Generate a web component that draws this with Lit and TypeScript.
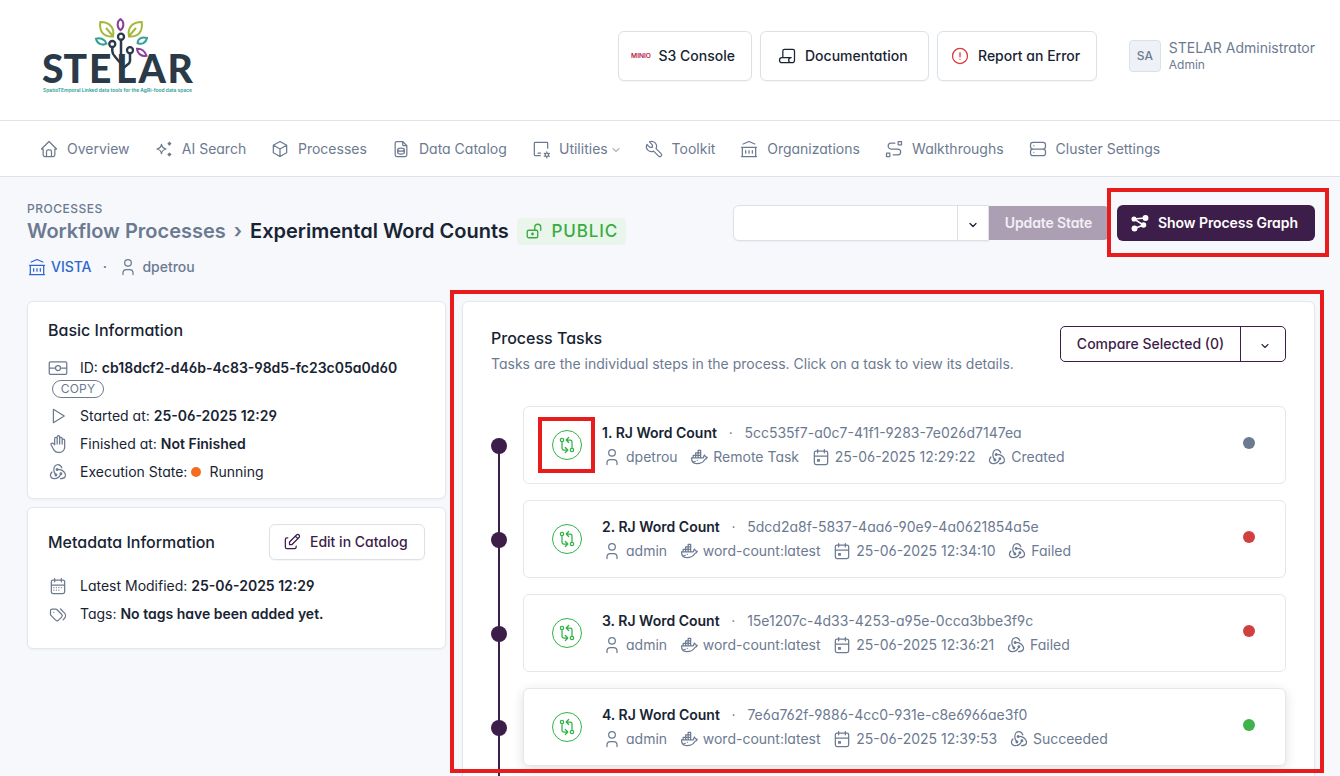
import { LitElement, html, svg, css } from "lit";
import { customElement, property } from "lit/decorators.js";
import { classMap } from "lit/directives/class-map.js";

const BANK = "M3 21l18 0M3 10l18 0M5 6l7 -3l7 3M4 10l0 11M20 10l0 11M8 14l0 3M12 14l0 3M16 14l0 3";
const CAL = "M4 7a2 2 0 0 1 2 -2h12a2 2 0 0 1 2 2v12a2 2 0 0 1 -2 2h-12a2 2 0 0 1 -2 -2v-12zM16 3v4M8 3v4M4 11h16";

const ICONS: Record<string, string> = {
  home: "M5 12l-2 0l9 -9l9 9l-2 0M5 12v7a2 2 0 0 0 2 2h10a2 2 0 0 0 2 -2v-7M9 21v-6a2 2 0 0 1 2 -2h2a2 2 0 0 1 2 2v6",
  spark: "M9 6.500q.9 4.600 5.500 5.500q-4.600 .9 -5.500 5.500q-.9 -4.600 -5.500 -5.500q4.600 -.9 5.500 -5.500zM17.300 5.500a1.200 1.200 0 1 0 2.400 0a1.200 1.200 0 0 0 -2.400 0M17.300 18.500a1.200 1.200 0 1 0 2.400 0a1.200 1.200 0 0 0 -2.400 0M16.800 5.500h3.400M18.500 3.800v3.400M16.800 18.500h3.400M18.500 16.800v3.400",
  box: "M12 3l8 4.5v9l-8 4.5l-8 -4.5v-9l8 -4.5M12 12l8 -4.5M12 12v9M12 12l-8 -4.5",
  filedb: "M8 12.75a4 1.75 0 1 0 8 0a4 1.75 0 1 0 -8 0M8 12.5v3.75c0 .966 1.79 1.75 4 1.75s4 -.784 4 -1.75v-3.75M14 3v4a1 1 0 0 0 1 1h4M17 21h-10a2 2 0 0 1 -2 -2v-14a2 2 0 0 1 2 -2h7l5 5v11a2 2 0 0 1 -2 2z",
  utils: "M20 11v-6a1 1 0 0 0 -1 -1h-14a1 1 0 0 0 -1 1v14a1 1 0 0 0 1 1h6M8.500 17h3M17 19a2 2 0 1 0 4 0a2 2 0 1 0 -4 0M19 15.500v1.500M19 21v1.500M22.030 17.250l-1.300 .750M17.270 20l-1.300 .750M15.970 17.250l1.300 .750M20.730 20l1.300 .750",
  tool: "M7 10h3v-3l-3.500 -3.500a6 6 0 0 1 8 8l6 6a2 2 0 0 1 -3 3l-6 -6a6 6 0 0 1 -8 -8l3.500 3.500",
  bank: BANK,
  route: "M3 17h4v4h-4zM17 3h4v4h-4zM11 19h5.500a3.500 3.500 0 0 0 0 -7h-8a3.500 3.500 0 0 1 0 -7h4.500",
  server: "M3 7a3 3 0 0 1 3 -3h12a3 3 0 0 1 3 3v2a3 3 0 0 1 -3 3h-12a3 3 0 0 1 -3 -3zM3 15a3 3 0 0 1 3 -3h12a3 3 0 0 1 3 3v2a3 3 0 0 1 -3 3h-12a3 3 0 0 1 -3 -3zM7 8l0 .01M7 16l0 .01",
  script: "M17 20h-11a3 3 0 0 1 0 -6h11a3 3 0 0 0 0 6h1a3 3 0 0 0 3 -3v-11a2 2 0 0 0 -2 -2h-10a2 2 0 0 0 -2 2v8",
  alert: "M3 12a9 9 0 1 0 18 0a9 9 0 1 0 -18 0M12 8v5M12 16v.01",
  lockopen: "M3 13a2 2 0 0 1 2 -2h10a2 2 0 0 1 2 2v6a2 2 0 0 1 -2 2h-10a2 2 0 0 1 -2 -2zM9 16a1 1 0 1 0 2 0a1 1 0 0 0 -2 0M13 11v-4a4 4 0 1 1 8 0v4",
  user: "M8 7a4 4 0 1 0 8 0a4 4 0 0 0 -8 0M6 21v-2a4 4 0 0 1 4 -4h4a4 4 0 0 1 4 4v2",
  redux: "M16.540 7c-.805 -2.365 -2.536 -4 -4.540 -4c-2.774 0 -5.023 2.632 -5.023 6.496c0 1.956 1.582 4.727 2.512 6M4.711 11.979c-1.656 1.877 -2.214 4.185 -1.211 5.911c1.387 2.390 5.138 2.831 8.501 .9c1.703 -.979 2.875 -3.362 3.516 -4.798M15.014 19.990c2.511 0 4.523 -.438 5.487 -2.100c1.387 -2.390 -.215 -5.893 -3.579 -7.824c-1.702 -.979 -4.357 -1.235 -5.927 -1.070M10.493 9.862c.480 .276 1.095 .112 1.372 -.366a1 1 0 0 0 -.367 -1.365a1.007 1.007 0 0 0 -1.373 .366c-.277 .478 -.112 1.089 .368 1.365zM8.500 15.500a1 1 0 1 0 2 0a1 1 0 1 0 -2 0M14.500 14a1 1 0 1 0 2 0a1 1 0 1 0 -2 0",
  hand: "M8 13v-7.500a1.500 1.500 0 0 1 3 0v6.500M11 5.500v-2a1.500 1.500 0 1 1 3 0v8.500M14 5.500a1.500 1.500 0 0 1 3 0v6.500M17 7.500a1.500 1.500 0 0 1 3 0v8.500a6 6 0 0 1 -6 6h-2h.208a6 6 0 0 1 -5.012 -2.700a69.740 69.740 0 0 1 -.196 -.300c-.312 -.479 -1.407 -2.388 -3.286 -5.728a1.500 1.500 0 0 1 .536 -2.022a1.867 1.867 0 0 1 2.280 .280l1.470 1.470",
  play: "M6.500 4v16l13 -8z",
  ident: "M3 4.500h18a1.500 1.500 0 0 1 1.500 1.500v12a1.500 1.500 0 0 1 -1.500 1.500h-18a1.500 1.500 0 0 1 -1.500 -1.500v-12a1.500 1.500 0 0 1 1.500 -1.500zM9 12a3 3 0 1 0 6 0a3 3 0 1 0 -6 0M1.500 12h7.500M15 12h7.500",
  calmonth: CAL + "M7 14h.013M10.010 14h.005M13.010 14h.005M16.015 14h.005M13.015 17h.005M7.010 17h.005M10.010 17h.005",
  calevent: CAL + "M8 15h2v2h-2z",
  tags: "M3 8v4.172a2 2 0 0 0 .586 1.414l5.710 5.710a2.410 2.410 0 0 0 3.408 0l3.592 -3.592a2.410 2.410 0 0 0 0 -3.408l-5.710 -5.710a2 2 0 0 0 -1.414 -.586h-4.172a2 2 0 0 0 -2 2zM18 19l1.592 -1.592a4.820 4.820 0 0 0 0 -6.816l-4.592 -4.592M7 10h-.01",
  edit: "M7 7h-1a2 2 0 0 0 -2 2v9a2 2 0 0 0 2 2h9a2 2 0 0 0 2 -2v-1M20.385 6.585a2.100 2.100 0 0 0 -2.970 -2.970l-8.415 8.385v3h3l8.385 -8.415zM16 5l3 3",
  docker: "M22 12.540c-1.804 -.345 -2.701 -1.080 -3.523 -2.940c-.487 .696 -1.102 1.568 -.920 2.400c.028 .238 -.320 1 -.557 1h-14c0 5.208 3.164 7 6.196 7c4.124 .022 7.828 -1.376 9.854 -5c1.146 -.101 2.296 -1.505 2.950 -2.460zM5 10h3v3h-3zM8 10h3v3h-3zM11 10h3v3h-3zM8 7h3v3h-3zM11 7h3v3h-3zM11 4h3v3h-3zM4.571 18c1.500 0 2.047 -.074 2.958 -.780M10 16l0 .01",
  compare: "M4 6a2 2 0 1 0 4 0a2 2 0 1 0 -4 0M16 18a2 2 0 1 0 4 0a2 2 0 1 0 -4 0M11 6h5a2 2 0 0 1 2 2v8M14 9l-3 -3l3 -3M13 18h-5a2 2 0 0 1 -2 -2v-8M10 15l3 3l-3 3",
  chevron: "M6 9l6 6l6 -6",
};

@customElement("ui-icon")
class UiIcon extends LitElement {
  @property() name = "home";
  @property({ type: Number }) size = 20;
  @property({ type: Number }) weight = 1.5;
  static styles = css`
    :host { display: inline-flex; flex: none; }
    svg { display: block; fill: none; stroke: currentColor; stroke-linecap: round; stroke-linejoin: round; }
  `;
  render() {
    return html`<svg width=${this.size} height=${this.size} viewBox="0 0 24 24" stroke-width=${this.weight}><path d=${ICONS[this.name]}></path></svg>`;
  }
}

@customElement("stelar-logo")
class StelarLogo extends LitElement {
  static styles = css`
    :host { display: block; }
    svg { display: block; overflow: visible; }
    .word { font: 900 39px Lato, sans-serif; fill: #2b3a48; }
    .tag { font: 600 4.200px Inter, sans-serif; fill: #2a9d94; }
  `;
  render() {
    return html`<svg width="152" height="80" viewBox="0 0 152 80">
      <text class="word" y="66" x="0 21.500 47 74 96.500 125.500">STELAR</text>
      <g fill="none" stroke="#2b3a48" stroke-width="2.500">
        <path d="M79 22v38M70.300 30v4q0 3 3 6l5.500 6.500M88 36v8q0 2 -3 4l-6 5"></path>
        <g fill="#fff" stroke-width="2.300">${svg`<circle cx="79" cy="19.700" r="3"></circle><circle cx="70.300" cy="27" r="3"></circle><circle cx="88" cy="33.200" r="3"></circle>`}</g>
      </g>
      <g fill="#fff" stroke-width="2">
        ${svg`<path stroke="#a2b93a" d="M71 19.500C61 20 57 14 58.300 5C67 5 73 10 71 19.500ZM70.500 18.500L64 11"></path>
        <path stroke="#a2b93a" d="M87 19.500C97 20 101 14 99.700 5C91 5 85 10 87 19.500ZM87.500 18.500L94 11"></path>
        <path stroke="#8b419c" d="M78.500 2.200C74.700 4.500 74.700 10.500 78.500 13.200C82.300 10.500 82.300 4.500 78.500 2.200Z"></path>
        <path stroke="#35a096" d="M54 21.700C58 20.500 63 22 64.500 26.700C60 29 55 26.700 54 21.700Z"></path>
        <path stroke="#35a096" d="M105 21C100.500 19.500 96 21 95.500 26C99.500 28 104 26 105 21Z"></path>
        <path stroke="#8b419c" d="M95 31.700C99 31.200 103 34 104.500 38.700C100 40 95.500 37 95 31.700Z"></path>`}
      </g>
      <text class="tag" x="1" y="75.300" textLength="149" lengthAdjust="spacingAndGlyphs">SpatioTEmporal Linked data tools for the AgRi-food data space</text>
    </svg>`;
  }
}

interface Task { n: number; id: string; user: string; image: string; time: string; state: string; tone: string; }
const TASKS: Task[] = [
  { n: 1, id: "5cc535f7-a0c7-41f1-9283-7e026d7147ea", user: "dpetrou", image: "Remote Task", time: "25-06-2025 12:29:22", state: "Created", tone: "grey" },
  { n: 2, id: "5dcd2a8f-5837-4aa6-90e9-4a0621854a5e", user: "admin", image: "word-count:latest", time: "25-06-2025 12:34:10", state: "Failed", tone: "red" },
  { n: 3, id: "15e1207c-4d33-4253-a95e-0cca3bbe3f9c", user: "admin", image: "word-count:latest", time: "25-06-2025 12:36:21", state: "Failed", tone: "red" },
  { n: 4, id: "7e6a762f-9886-4cc0-931e-c8e6966ae3f0", user: "admin", image: "word-count:latest", time: "25-06-2025 12:39:53", state: "Succeeded", tone: "green" },
];

const NAV: [string, string, number][] = [
  ["home", "Overview", 114.8], ["spark", "AI Search", 116.2], ["box", "Processes", 121],
  ["filedb", "Data Catalog", 140], ["utils", "Utilities", 112.6], ["tool", "Toolkit", 95.6],
  ["bank", "Organizations", 144.9], ["route", "Walkthroughs", 143.500], ["server", "Cluster Settings", 140],
];

@customElement("app-root")
class AppRoot extends LitElement {
  static styles = css`
    :host {
      display: block; position: relative; width: 1340px; height: 776px; overflow: hidden;
      background: #f6f8fb; color: #182433;
      font: 400 14px/20px Inter, sans-serif;
      font-feature-settings: "cv03", "cv04", "cv11";
    }
    * { box-sizing: border-box; }
    b { font-weight: 600; }
    .muted { color: #6c7a91; }
    header { display: flex; height: 121px; background: #fff; border-bottom: 1px solid #dfe3e9; padding: 17px 25px 0 42px; }
    .actions { display: flex; gap: 8px; margin: 14px 0 0 424px; }
    .btn { display: flex; align-items: center; background: #fff; border: 1px solid #dce1e7; border-radius: 6px; font-weight: 500; box-shadow: 0 1px 1px rgba(24,36,51,.04); white-space: nowrap; }
    .top { height: 50px; }
    .s3 { width: 134px; padding-left: 12px; gap: 7.5px; }
    .doc { width: 169px; padding-left: 16px; gap: 8px; }
    .err { width: 160px; padding-left: 12px; gap: 8px; }
    .err ui-icon { color: #d63939; }
    .mark { font: 600 5.5px Inter, sans-serif; fill: #b5203f; }
    .avatar { width: 32px; height: 32px; border: 1px solid #dce1e7; border-radius: 4px; background: #eef2f6; color: #6c7a91; display: flex; align-items: center; justify-content: center; font-size: 12px; font-weight: 450; margin: 23px 8px 0 32px; }
    .who { margin-top: 21px; color: #6c7a91; white-space: nowrap; }
    .who small { display: block; font-size: 12px; line-height: 14px; }
    nav { display: flex; height: 56px; background: #fff; border-bottom: 1px solid #dfe3e9; padding-left: 39px; align-items: center; color: #6c7a91; }
    .item { display: flex; align-items: center; gap: 8px; white-space: nowrap; flex: none; }
    .item .caret { margin-left: -6px; margin-top: 3px; }
    .head { display: flex; height: 124px; padding: 24px 25px 0 27px; }
    .titles { width: 706px; white-space: nowrap; }
    .pre { font-size: 12px; line-height: 16px; font-weight: 500; letter-spacing: .5px; color: #6c7a91; }
    .title { display: flex; align-items: center; font-size: 20px; line-height: 28px; font-weight: 600; }
    .title .sep { width: 24.3px; text-align: center; }
    .badge { display: flex; align-items: center; gap: 8px; margin-left: 8.7px; width: 109px; height: 27px; padding-left: 8px; border-radius: 4px; background: #eaf6ec; color: #39ac42; font-size: 17px; font-weight: 500; letter-spacing: .85px; }
    .meta { display: flex; align-items: center; margin-top: 12px; color: #6c7a91; font-weight: 500; }
    .meta .org { display: flex; align-items: center; color: #2f67ce; gap: 4px; font-weight: 550; letter-spacing: -.05px; }
    .meta .dot { width: 27px; text-align: center; }
    .meta .usr { display: flex; gap: 4px; font-weight: 550; }
    .tools { display: flex; padding-top: 4px; height: 40px; }
    .select { display: flex; width: 256px; height: 36px; background: #fff; border: 1px solid #dce1e7; border-radius: 6px 0 0 6px; box-shadow: 0 1px 1px rgba(24,36,51,.05); }
    .field { width: 224px; border-right: 1px solid #dce1e7; }
    .select ui-icon { padding: 13px 0 0 9px; }
    .update { width: 119px; height: 34px; margin-top: 1px; background: #ac9fb4; color: #f3eff6; font-weight: 600; border-radius: 0 4px 4px 0; line-height: 34px; text-align: center; letter-spacing: -.12px; }
    .graph { display: flex; align-items: center; width: 198px; height: 36px; margin-left: 9px; padding-left: 13px; gap: 8px; background: #3d1d49; color: #fff; border-radius: 6px; font-weight: 600; white-space: nowrap; letter-spacing: -.07px; }
    main { display: flex; align-items: flex-start; gap: 16px; padding-left: 27px; }
    .side { width: 419px; display: grid; gap: 8px; }
    .card { background: #fff; border: 1px solid #e4e7ec; border-radius: 6px; box-shadow: 0 1px 3px rgba(24,36,51,.04); }
    .basic { height: 198px; padding: 16px 20px; }
    .metadata { height: 142px; padding: 16px 20px; }
    h3 { margin: 0; font-size: 16px; line-height: 24px; font-weight: 500; }
    .row { display: flex; align-items: center; height: 20px; margin-bottom: 8px; white-space: pre; }
    .row > ui-icon { color: #6c7a91; margin-right: 12px; }
    .basic h3 { margin-bottom: 16px; }
    .basic .first { margin-bottom: 2px; }
    .copy { width: 52px; height: 18px; margin: 0 0 8px 4px; border: 1px solid #6c7a91; border-radius: 9px; color: #6c7a91; font-size: 12px; line-height: 16px; text-align: center; letter-spacing: .2px; }
    .status { width: 10px; height: 10px; border-radius: 50%; background: #f36c21; margin: 0 8px 0 4px; }
    .mh { display: flex; justify-content: space-between; align-items: center; margin-bottom: 16px; }
    .edit { width: 156px; height: 36px; padding-left: 12px; gap: 8px; color: #3d1d49; }
    .tasks { width: 853px; height: 500px; padding: 24px 28px; }
    .th { display: flex; justify-content: space-between; height: 80px; }
    .th p { margin: 4px 0 0; color: #6c7a91; }
    .cmp { display: flex; width: 226px; height: 36px; border: 1px solid #3d1d49; border-radius: 5px; color: #3d1d49; font-weight: 500; }
    .cmp span { width: 180px; border-right: 1px solid #3d1d49; line-height: 34px; text-align: center; }
    .cmp ui-icon { padding: 13px 0 0 18px; }
    .line { display: flex; }
    .rail { width: 32px; height: 94px; flex: none; background: linear-gradient(#3d1d49, #3d1d49) 7px 0 / 2px 100% no-repeat; }
    .rail.start { background-position: 7px 40px; }
    .node { width: 16px; height: 16px; margin-top: 32px; border-radius: 50%; background: #3d1d49; }
    .task { display: flex; width: 763px; height: 78px; padding: 17px 30px 0 28px; border: 1px solid #e4e7ec; border-radius: 6px; background: #fff; }
    .task.lift { box-shadow: 0 3px 12px rgba(24,36,51,.14); }
    .ring { width: 30px; height: 30px; margin: 6px 20px 0 0; border: 1px solid #2fb344; border-radius: 50%; color: #2fb344; display: flex; align-items: center; justify-content: center; flex: none; }
    .body { flex: 1; white-space: nowrap; }
    .name { display: flex; margin-top: -1px; }
    .name i { width: 27.5px; text-align: center; color: #6c7a91; font-style: normal; }
    .info { display: flex; margin-top: 4px; color: #6c7a91; }
    .info span { display: flex; align-items: center; gap: 4px; margin-right: 11.7px; }
    .lamp { width: 12px; height: 12px; border-radius: 50%; margin-top: 13px; }
    .grey { background: #6c7a91; } .red { background: #d04040; } .green { background: #3fb24a; }
    .mk { position: absolute; border: 4px solid #e81c1c; }
    .m1 { left: 1107px; top: 188px; width: 222px; height: 69px; }
    .m2 { left: 450px; top: 290px; width: 874px; height: 483px; }
    .m3 { left: 538px; top: 417px; width: 57px; height: 56px; }
  `;

  private task(t: Task) {
    return html`<div class="line">
      <div class=${classMap({ rail: true, start: t.n === 1 })}><div class="node"></div></div>
      <div class=${classMap({ task: true, lift: t.n === 4 })}>
        <div class="ring"><ui-icon name="compare" size="20"></ui-icon></div>
        <div class="body">
          <div class="name"><b>${t.n}. RJ Word Count</b><i>·</i><span class="muted">${t.id}</span></div>
          <div class="info">
            <span><ui-icon name="user"></ui-icon>${t.user}</span>
            <span><ui-icon name="docker"></ui-icon>${t.image}</span>
            <span><ui-icon name="calevent"></ui-icon>${t.time}</span>
            <span><ui-icon name="redux"></ui-icon>${t.state}</span>
          </div>
        </div>
        <div class="lamp ${t.tone}"></div>
      </div>
    </div>`;
  }

  render() {
    return html`
      <header>
        <stelar-logo></stelar-logo>
        <div class="actions">
          <div class="btn top s3"><svg width="20" height="8" viewBox="0 0 20 8"><text class="mark" x="0" y="6" textLength="20" lengthAdjust="spacingAndGlyphs">MINIO</text></svg>S3 Console</div>
          <div class="btn top doc"><ui-icon name="script"></ui-icon>Documentation</div>
          <div class="btn top err"><ui-icon name="alert"></ui-icon>Report an Error</div>
        </div>
        <div class="avatar">SA</div>
        <div class="who">STELAR Administrator<small>Admin</small></div>
      </header>
      <nav>${NAV.map(([icon, label, w]) => html`<div class="item" style="width:${w}px"><ui-icon name=${icon}></ui-icon>${label}${label === "Utilities" ? html`<ui-icon class="caret" name="chevron" size="12" weight="2"></ui-icon>` : ""}</div>`)}</nav>
      <section class="head">
        <div class="titles">
          <div class="pre">PROCESSES</div>
          <div class="title"><span class="muted">Workflow Processes</span><span class="sep muted">›</span><span>Experimental Word Counts</span>
            <span class="badge"><ui-icon name="lockopen" size="18" weight="1.800"></ui-icon>PUBLIC</span></div>
          <div class="meta"><span class="org"><ui-icon name="bank"></ui-icon>VISTA</span><span class="dot">·</span><span class="usr"><ui-icon name="user"></ui-icon>dpetrou</span></div>
        </div>
        <div class="tools">
          <div class="select"><div class="field"></div><ui-icon name="chevron" size="12" weight="2.500"></ui-icon></div>
          <div class="update">Update State</div>
          <div class="graph"><svg width="20" height="20" viewBox="0 0 20 20" fill="#fff" stroke="#fff" stroke-width="1.500"><path fill="none" d="M4 6L15 5M4 6L13.500 12L4.500 15.500"></path><circle cx="4" cy="6" r="1.800"></circle><circle cx="15.500" cy="5" r="2.200"></circle><circle cx="13.500" cy="12" r="2"></circle><circle cx="4.500" cy="15.500" r="2.200"></circle></svg>Show Process Graph</div>
        </div>
      </section>
      <main>
        <div class="side">
          <div class="card basic">
            <h3>Basic Information</h3>
            <div class="row first"><ui-icon name="ident"></ui-icon>ID: <b>cb18dcf2-d46b-4c83-98d5-fc23c05a0d60</b></div>
            <div class="copy">COPY</div>
            <div class="row"><ui-icon name="play"></ui-icon>Started at: <b>25-06-2025 12:29</b></div>
            <div class="row"><ui-icon name="hand"></ui-icon>Finished at: <b>Not Finished</b></div>
            <div class="row"><ui-icon name="redux"></ui-icon>Execution State:<span class="status"></span>Running</div>
          </div>
          <div class="card metadata">
            <div class="mh"><h3>Metadata Information</h3><div class="btn edit"><ui-icon name="edit"></ui-icon>Edit in Catalog</div></div>
            <div class="row"><ui-icon name="calmonth"></ui-icon>Latest Modified: <b>25-06-2025 12:29</b></div>
            <div class="row"><ui-icon name="tags"></ui-icon>Tags: <b>No tags have been added yet.</b></div>
          </div>
        </div>
        <div class="card tasks">
          <div class="th"><div><h3>Process Tasks</h3><p>Tasks are the individual steps in the process. Click on a task to view its details.</p></div>
            <div class="cmp"><span>Compare Selected (0)</span><ui-icon name="chevron" size="12" weight="2.200"></ui-icon></div></div>
          ${TASKS.map((t) => this.task(t))}
        </div>
      </main>
      <div class="mk m1"></div><div class="mk m2"></div><div class="mk m3"></div>
    `;
  }
}
